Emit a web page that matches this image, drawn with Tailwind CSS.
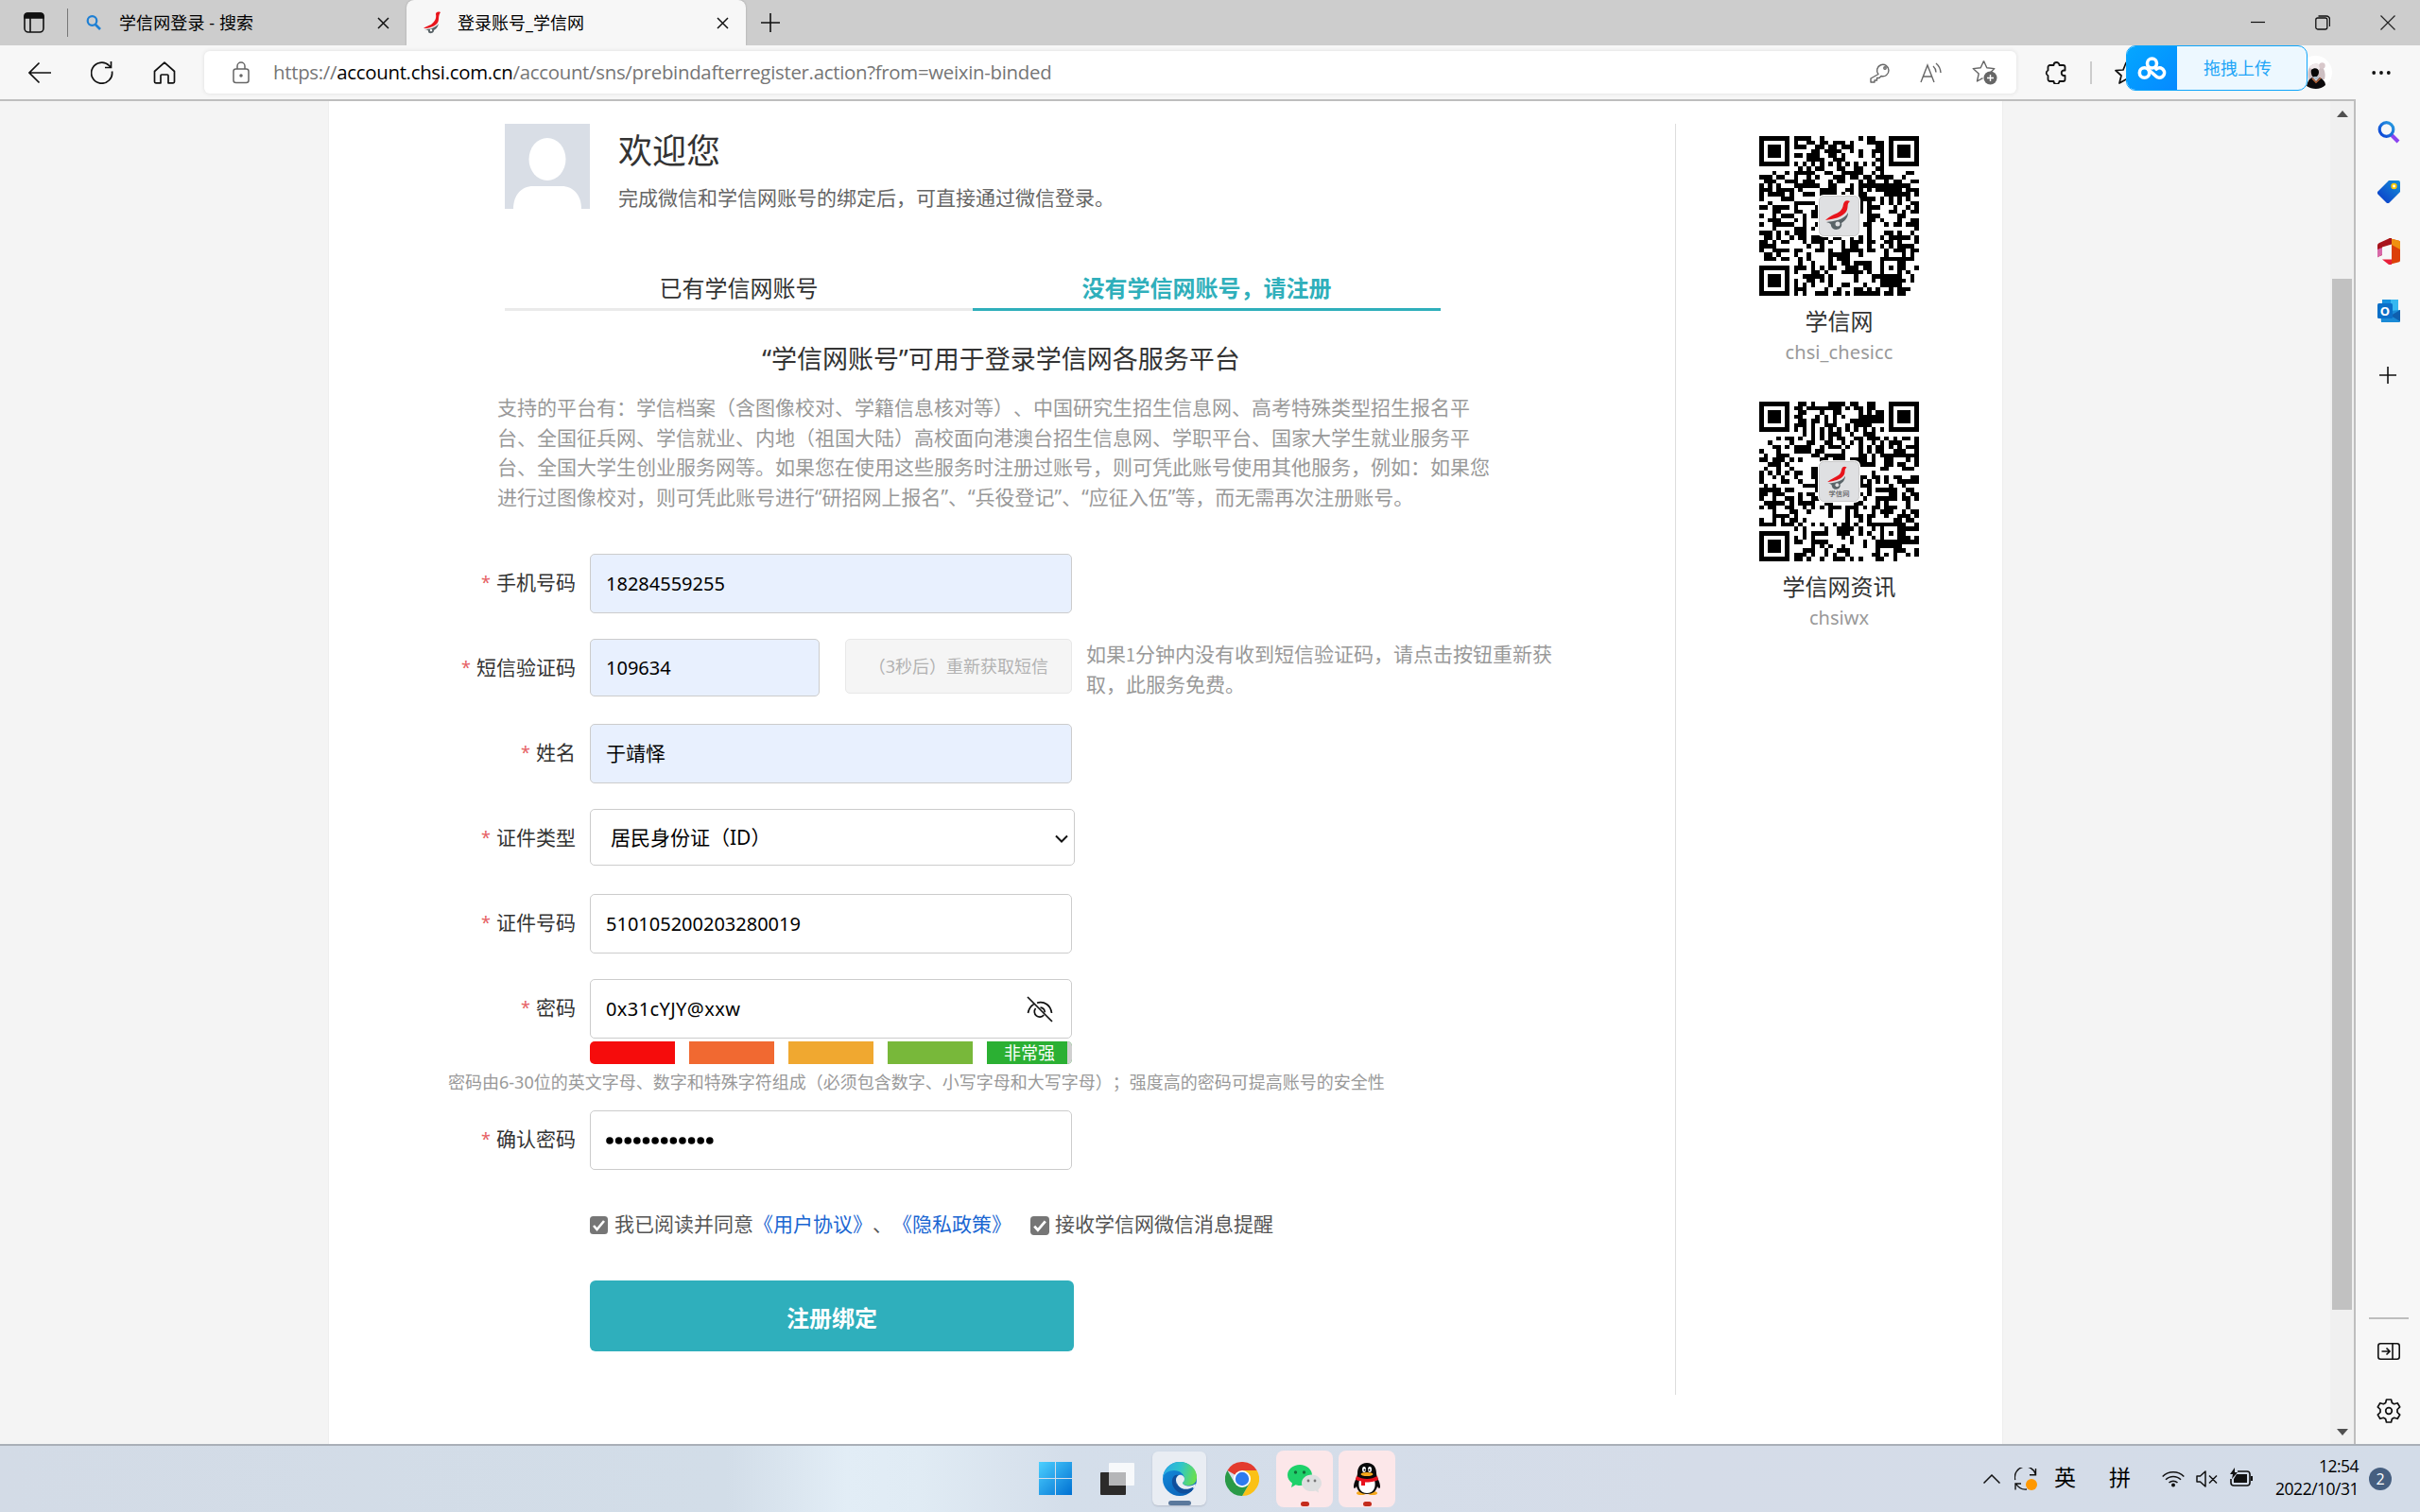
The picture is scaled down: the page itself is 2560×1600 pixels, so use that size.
<!DOCTYPE html>
<html lang="zh-CN">
<head>
<meta charset="utf-8">
<title>登录账号_学信网</title>
<script src="https://cdn.jsdelivr.net/npm/@tailwindcss/browser@4"></script>
</head>
<body class="w-[2560px] h-[1600px] overflow-hidden bg-[#f7f7f7] font-['Noto_Sans','Noto_Sans_CJK_SC',sans-serif] text-[21px] text-[#333] [text-spacing-trim:space-all]">
<div class="flex flex-col w-[2560px] h-[1600px]">

<!-- Tab strip -->
<header class="flex h-12 shrink-0 bg-[#cdcdcd] font-['Open_Sans','Noto_Sans_CJK_SC',sans-serif] text-[18px] text-black">
  <div class="flex items-center w-[430px] pl-[25px]">
    <svg class="w-[22px] h-[22px] shrink-0" viewBox="0 0 22 22" fill="none" stroke="#111" stroke-width="1.6"><rect x="1" y="1" width="20" height="20" rx="4"/><path d="M1 6V4a3 3 0 0 1 3-3h14a3 3 0 0 1 3 3v2z" fill="#111"/><path d="M7 6v15"/></svg>
    <span class="w-px h-[30px] bg-[#777] ml-6"></span>
    <svg class="w-4 h-4 ml-[19px] shrink-0" viewBox="0 0 16 16" fill="none" stroke="#1d7fd4" stroke-width="2.2"><circle cx="6.5" cy="6" r="4.8"/><path d="M10 10l5 5" stroke-width="2.6"/></svg>
    <span class="ml-[19px] w-[273px] whitespace-nowrap leading-6 tracking-[0.1px]">学信网登录 - 搜索</span>
    <svg class="w-[13px] h-[13px] shrink-0" viewBox="0 0 13 13" stroke="#111" stroke-width="1.5"><path d="M1 1l11 11M12 1L1 12"/></svg>
  </div>
  <div class="flex items-center w-[359px] h-full rounded-t-lg bg-[#f7f7f7] pl-[17px] shadow-[0_0_2px_#999]">
    <svg class="w-5 h-6 shrink-0" viewBox="0 0 20 24"><path d="M19 1c-3-1-5 0-5 2 1 4-1 8-5 11-2 1-6 2-8 4 6 0 12-2 15-6 2-3 0-7 3-11z" fill="#e8141c"/><path d="M2 19c5 0 11-1 15-6-1 4-3 6-5 7 1 3-6 5-6 1 0-1 0-1-4-2z" fill="#5a6468"/><circle cx="9" cy="20" r="1.2" fill="#fff"/></svg>
    <span class="ml-[17px] w-[274px] whitespace-nowrap leading-6">登录账号_学信网</span>
    <svg class="w-[13px] h-[13px] shrink-0" viewBox="0 0 13 13" stroke="#111" stroke-width="1.5"><path d="M1 1l11 11M12 1L1 12"/></svg>
  </div>
  <div class="flex items-center pl-4">
    <svg class="w-5 h-5" viewBox="0 0 20 20" stroke="#111" stroke-width="1.6"><path d="M10 0v20M0 10h20"/></svg>
  </div>
  <div class="flex items-center ml-auto pr-[26px] gap-[53px]">
    <svg class="w-[15px] h-4" viewBox="0 0 15 16" stroke="#111" stroke-width="1.2"><path d="M0 7.5h15"/></svg>
    <svg class="w-4 h-4" viewBox="0 0 16 16" fill="none" stroke="#111" stroke-width="1.3"><rect x=".8" y="3" width="12" height="12" rx="2"/><path d="M3.5 1h8.500a3.500 3.500 0 0 1 3.500 3.500V12"/></svg>
    <svg class="w-4 h-4" viewBox="0 0 16 16" stroke="#222" stroke-width="1.2"><path d="M.5.5l15 15M15.500.5l-15 15"/></svg>
  </div>
</header>

<!-- Toolbar -->
<div class="relative flex items-center h-[57px] shrink-0 bg-[#f7f7f7] pl-[30px] font-['Open_Sans','Noto_Sans_CJK_SC',sans-serif]">
  <svg class="w-6 h-6" viewBox="0 0 24 24" fill="none" stroke="#111" stroke-width="1.7"><path d="M24 12H1M11.500 1.500L1 12l10.500 10.500"/></svg>
  <svg class="w-6 h-6 ml-[42px]" viewBox="0 0 24 24" fill="none" stroke="#111" stroke-width="1.7"><path d="M22.500 10.500A11 11 0 1 1 19.500 4.500L21 6M21.500 0v6.500H15"/></svg>
  <svg class="w-6 h-6 ml-[42px]" viewBox="0 0 24 24" fill="none" stroke="#111" stroke-width="1.7" stroke-linejoin="round"><path d="M1.500 10.500L12 1.200l10.500 9.300V21.500a1.300 1.300 0 0 1-1.300 1.300H16V15a1 1 0 0 0-1-1H9a1 1 0 0 0-1 1v7.800H2.800a1.300 1.300 0 0 1-1.300-1.300z"/></svg>
  <div class="flex items-center w-[1917px] h-[45px] ml-[30px] rounded-md bg-white shadow-[0_0_4px_#ddd]">
    <svg class="w-[18px] h-6 ml-[30px]" viewBox="0 0 18 24" fill="none" stroke="#666" stroke-width="1.5"><rect x="1" y="8" width="16" height="14.500" rx="2.500"/><path d="M5 8V5a4 4 0 0 1 8 0v3"/><circle cx="9" cy="15" r="1" fill="#666"/></svg>
    <span class="ml-[25px] text-[20.4px] tracking-[-0.29px] text-[#757575] whitespace-nowrap">https://<span class="text-black">account.chsi.com.cn</span>/account/sns/prebindafterregister.action?from=weixin-binded</span>
    <div class="flex items-center gap-[31px] ml-auto pr-5">
      <svg class="w-[22px] h-[22px]" viewBox="0 0 22 22" fill="none" stroke="#666" stroke-width="1.4" stroke-linejoin="round"><path d="M9 12.500a6.200 6.200 0 1 1 3 2L10 16.500H7.500V19H5v2H1v-4z"/><circle cx="16" cy="6" r="1.200"/></svg>
      <svg class="w-6 h-[22px]" viewBox="0 0 24 22" fill="none" stroke="#666" stroke-width="1.400"><path d="M1 21L8 3l7 18M3.500 15h9M14 4a9 9 0 0 1 3 6.500M17 1a14 14 0 0 1 5 10"/></svg>
      <svg class="w-[27px] h-[27px]" viewBox="0 0 27 27" fill="none" stroke="#666" stroke-width="1.400" stroke-linejoin="round"><path d="M12.500 1.500l3.300 7.300 8 .8-5 5M12.500 1.500L9.200 8.800l-8 .8 6 5.400-1.700 8 6-3.300"/><circle cx="19.500" cy="19.500" r="7" fill="#666" stroke="none"/><path d="M19.500 16v7M16 19.500h7" stroke="#fff"/></svg>
    </div>
  </div>
  <svg class="w-6 h-6 ml-[30px]" viewBox="0 0 24 24" fill="none" stroke="#111" stroke-width="1.8" stroke-linejoin="round"><path d="M5.500 4H9.500a3 3 0 0 1 6 0h4a2 2 0 0 1 2 2v3.500h-1.500a2.800 2.800 0 0 0 0 5.500h1.500v4a2 2 0 0 1-2 2h-4a3 3 0 0 1-6 0h-4a2 2 0 0 1-2-2v-4a3 3 0 0 1 0-5.500V6a2 2 0 0 1 2-2z"/></svg>
  <span class="w-0.5 h-6 bg-[#ccc] ml-6"></span>
  <svg class="w-6 h-6 ml-6" viewBox="0 0 24 24" fill="none" stroke="#111" stroke-width="1.7" stroke-linejoin="round"><path d="M12 1.500l3 7.500 8 .5-6 5.500 2 8-7-4-7 4 2-8-6-5.500 8-.5z"/></svg>
  <svg class="w-[35px] h-[35px] ml-[171px]" viewBox="0 0 35 35"><circle cx="17.500" cy="17.500" r="17.500" fill="#fff"/><path d="M10 26c-1-6-1-12 2-15 4-4 10-3 13 1 3 5 3 9 2 13z" fill="#cdbfc2"/><path d="M11 13c2-5 9-6 13-2l-4 5z" fill="#efe8ea"/><circle cx="24.500" cy="10.500" r="3.200" fill="#d8c8cb"/><path d="M13 15c3-3 8-2 8 2s-3 6-5 6-4-5-3-8z" fill="#060606"/><path d="M8 32c1-5 3-8 6-9l4 4 4-4c4 2 6 5 6 8-5 5-14 5-20 1z" fill="#0c0a0c"/><path d="M14 24l4 4.500 5-5" stroke="#c46a3a" stroke-width="1.200" fill="none"/><path d="M15 22h6l-3 4z" fill="#a9bccb"/></svg>
  <svg class="w-5 h-1.5 ml-auto mr-[31px]" viewBox="0 0 20 6" fill="#111"><circle cx="2.200" cy="3" r="1.900"/><circle cx="10" cy="3" r="1.900"/><circle cx="17.800" cy="3" r="1.900"/></svg>
  <!-- Floating drag-to-upload widget -->
  <div class="absolute left-[2249px] top-0 z-10 flex w-[192px] h-12 rounded-[10px] border border-[#0ea5fb] bg-[#edf8ff] overflow-hidden text-[18px] text-[#22a5f7]">
    <div class="flex items-center justify-center w-[53px] bg-linear-to-br from-[#06a7ff] to-[#0789ff]">
      <svg class="w-[31px] h-[25px]" viewBox="0 0 31 25" fill="none" stroke="#fff" stroke-width="3.600" stroke-linecap="round"><circle cx="15.500" cy="7" r="5"/><circle cx="7.500" cy="17" r="5.200"/><path d="M11.500 13.500l8 7a5.200 5.200 0 1 0 .5-7.500"/></svg>
    </div>
    <div class="flex flex-1 items-center justify-center pr-[9px]">拖拽上传</div>
  </div>
</div>

<!-- Viewport and browser sidebar -->
<div class="flex h-[1423px] shrink-0">
  <div class="flex w-[2492px] border-t-2 border-r-2 border-[#bebebe] bg-[#f4f4f4]">
    <main class="flex w-[1772px] ml-[347px] border-x border-[#eee] bg-white">
      <section class="w-[1424px] shrink-0 pt-6">
        <!-- Greeting -->
        <div class="flex pl-[186px] h-[90px]">
          <svg class="w-[90px] h-[90px]" viewBox="0 0 90 90"><path d="M0 0h90v90H0z" fill="#d9dee6"/><ellipse cx="45" cy="37.500" rx="19.500" ry="22.500" fill="#fff"/><path d="M9 90c0-14 8-24 21-24h30c13 0 21 10 21 24z" fill="#fff"/></svg>
          <div class="ml-[30px]">
            <h1 class="text-[36px] leading-[58px]">欢迎您</h1>
            <p class="mt-1 leading-8 text-[#666]">完成微信和学信网账号的绑定后，可直接通过微信登录。</p>
          </div>
        </div>
        <!-- Tabs -->
        <div class="flex ml-[186px] mt-[60px] w-[990px] text-[24px] text-center leading-[47px]">
          <div class="w-[495px] h-12 border-b-3 border-[#eaeaea]">已有学信网账号</div>
          <div class="w-[495px] h-12 border-b-3 border-[#2fafbb] font-bold text-[#2fafbb]">没有学信网账号，请注册</div>
        </div>
        <h2 class="ml-[178px] mt-[31px] w-[1066px] text-center text-[27px] leading-10">“学信网账号”可用于登录学信网各服务平台</h2>
        <p class="ml-[178px] mt-4 text-[#999] leading-[31.5px] whitespace-nowrap">支持的平台有：学信档案（含图像校对、学籍信息核对等）、中国研究生招生信息网、高考特殊类型招生报名平<br>台、全国征兵网、学信就业、内地（祖国大陆）高校面向港澳台招生信息网、学职平台、国家大学生就业服务平<br>台、全国大学生创业服务网等。如果您在使用这些服务时注册过账号，则可凭此账号使用其他服务，例如：如果您<br>进行过图像校对，则可凭此账号进行“研招网上报名”、“兵役登记”、“应征入伍”等，而无需再次注册账号。</p>

        <!-- Form -->
        <form class="mt-[44px]">
          <div class="flex h-[90px]">
            <label class="flex items-center justify-end w-[261px] h-[61px] mr-[15px]"><span class="text-[#e66163] text-[18px] mr-1.5">*</span>手机号码</label>
            <div class="flex items-center w-[510px] h-[63px] px-4 border border-[#ccc] rounded-[5px] bg-[#e8f0fe] text-[20px] text-black">18284559255</div>
          </div>
          <div class="flex h-[90px]">
            <label class="flex items-center justify-end w-[261px] h-[61px] mr-[15px]"><span class="text-[#e66163] text-[18px] mr-1.5">*</span>短信验证码</label>
            <div class="flex items-center w-[243px] h-[61px] px-4 border border-[#ccc] rounded-[5px] bg-[#e8f0fe] text-[20px] text-black">109634</div>
            <div class="flex items-center justify-end w-[240px] h-[58px] ml-[27px] pr-[24px] border border-[#e8e8e8] rounded-[5px] bg-[#f5f5f5] text-[18px] text-[#b2b2b2]">（3秒后）重新获取短信</div>
            <p class="ml-[15px] pt-px text-[#999] leading-[31.5px] whitespace-nowrap">如果<span class="font-['Noto_Sans_CJK_SC'] text-[18px]">1</span>分钟内没有收到短信验证码，请点击按钮重新获<br>取，此服务免费。</p>
          </div>
          <div class="flex h-[90px]">
            <label class="flex items-center justify-end w-[261px] h-[61px] mr-[15px]"><span class="text-[#e66163] text-[18px] mr-1.5">*</span>姓名</label>
            <div class="flex items-center w-[510px] h-[63px] px-4 border border-[#ccc] rounded-[5px] bg-[#e8f0fe] text-black">于靖怿</div>
          </div>
          <div class="flex h-[90px]">
            <label class="flex items-center justify-end w-[261px] h-[61px] mr-[15px]"><span class="text-[#e66163] text-[18px] mr-1.5">*</span>证件类型</label>
            <div class="flex items-center justify-between w-[513px] h-[60px] pl-[21px] pr-1.5 border border-[#ccc] rounded-[5px] text-black pt-0.5">居民身份证（ID）
              <svg class="w-3.5 h-[9px]" viewBox="0 0 14 9" fill="none" stroke="#111" stroke-width="2"><path d="M1 1.500l6 6 6-6"/></svg></div>
          </div>
          <div class="flex h-[90px]">
            <label class="flex items-center justify-end w-[261px] h-[61px] mr-[15px]"><span class="text-[#e66163] text-[18px] mr-1.5">*</span>证件号码</label>
            <div class="flex items-center w-[510px] h-[63px] px-4 border border-[#ccc] rounded-[5px] text-[20px] text-black">510105200203280019</div>
          </div>
          <div class="flex h-[66px]">
            <label class="flex items-center justify-end w-[261px] h-[61px] mr-[15px]"><span class="text-[#e66163] text-[18px] mr-1.5">*</span>密码</label>
            <div class="flex items-center justify-between w-[510px] h-[63px] pl-4 pr-[19px] border border-[#ccc] rounded-[5px] text-[20px] text-black"><span class="tracking-[0.4px]">0x31cYJY@xxw</span>
              <svg class="w-7 h-7" viewBox="0 0 28 28" fill="none" stroke="#111" stroke-width="1.700"><path d="M1 1l26 26M1.500 18c.8-4.500 3-7.500 6-9.300M11 7.200C19 5 25.500 10 26.500 18M9.500 13a5.500 5.500 0 1 0 8.700 7M14.500 12.200a5.500 5.500 0 0 1 4.800 5"/></svg></div>
          </div>
          <div class="flex gap-[15px] ml-[276px] w-[510px] h-6 rounded-[5px] overflow-hidden">
            <div class="w-[90px] bg-[#f60c0c]"></div>
            <div class="w-[90px] bg-[#f16931]"></div>
            <div class="w-[90px] bg-[#f0a830]"></div>
            <div class="w-[90px] bg-[#78b83a]"></div>
            <div class="flex items-center justify-center w-[90px] border-r-5 border-[#d0d0d0] bg-[#2bb033] text-[18px] leading-6 text-white pl-[5px]">非常强</div>
          </div>
          <p class="ml-[126px] h-[49px] text-[18px] leading-[39px] text-[#999] whitespace-nowrap">密码由6-30位的英文字母、数字和特殊字符组成（必须包含数字、小写字母和大写字母）；强度高的密码可提高账号的安全性</p>
          <div class="flex h-[63px]">
            <label class="flex items-center justify-end w-[261px] h-[61px] mr-[15px]"><span class="text-[#e66163] text-[18px] mr-1.5">*</span>确认密码</label>
            <div class="flex items-center w-[510px] h-[63px] px-4 pt-px border border-[#ccc] rounded-[5px]">
              <svg class="w-[115px] h-2" viewBox="0 0 115 8"><path d="M4 4h106" stroke="#000" stroke-width="7.600" stroke-linecap="round" stroke-dasharray="0 9.620"/></svg>
            </div>
          </div>
          <div class="flex items-center ml-[276px] mt-[42px] h-8 text-[#555] whitespace-nowrap">
            <svg class="w-[19px] h-[19px] mr-[7px]" viewBox="0 0 19 19"><rect width="19" height="19" rx="3.500" fill="#767676"/><path d="M4 10l3.500 4L15 5" fill="none" stroke="#fff" stroke-width="2.600"/></svg>
            <span>我已阅读并同意<span class="text-[#1a66d2]">《用户协议》</span>、<span class="text-[#1a66d2]">《隐私政策》</span></span>
            <svg class="w-5 h-5 ml-5 mr-1.5 mt-0.5" viewBox="0 0 19 19"><rect width="19" height="19" rx="3.500" fill="#767676"/><path d="M4 10l3.500 4L15 5" fill="none" stroke="#fff" stroke-width="2.600"/></svg>
            <span>接收学信网微信消息提醒</span>
          </div>
          <div class="flex items-center justify-center ml-[276px] mt-[43px] w-[512px] h-[75px] rounded-md bg-[#2fafbc] text-[24px] font-bold text-white pt-1">注册绑定</div>
        </form>
      </section>

      <!-- Official accounts -->
      <aside class="flex flex-col items-center w-[346px] h-[1345px] mt-6 border-l border-[#ddd] pt-[13px]">
        <div class="relative w-[169px] h-[169px]">
          <svg data-qr="7" class="w-[169px] h-[169px]" viewBox="0 0 37 37" shape-rendering="crispEdges"></svg>
          <svg class="absolute left-[62px] top-[62px] w-[45px] h-[45px]" viewBox="0 0 45 45"><rect width="45" height="45" rx="6" fill="#fff"/><rect x="1.500" y="1.500" width="42" height="42" rx="5" fill="#dfe0e2" stroke="#c9c9c9"/><path d="M34 7c-4-2-6 0-7 3-1 7-5 9-10 11-4 2-7 4-9 6 8-1 18-3 22-9 3-5 0-8 4-11z" fill="#e8141c"/><path d="M9 29c7-1 19-2 23-10 0 6-4 9-7 11 2 7-9 10-11 3 0-2-1-3-5-4z" fill="#5a6468"/><circle cx="21" cy="31" r="2.500" fill="#dfe0e2"/></svg>
        </div>
        <div class="mt-[10px] text-[24px] leading-[34px]">学信网</div>
        <div class="mt-0.5 text-[20px] leading-7 tracking-[0.100px] text-[#999]">chsi_chesicc</div>
        <div class="relative w-[169px] h-[169px] mt-[38px]">
          <svg data-qr="91" class="w-[169px] h-[169px]" viewBox="0 0 37 37" shape-rendering="crispEdges"></svg>
          <svg class="absolute left-[62px] top-[62px] w-[45px] h-[45px]" viewBox="0 0 45 45"><rect width="45" height="45" rx="6" fill="#fff"/><rect x="1.500" y="1.500" width="42" height="42" rx="5" fill="#dfe0e2" stroke="#c9c9c9"/><g transform="translate(4 2) scale(.78)"><path d="M34 7c-4-2-6 0-7 3-1 7-5 9-10 11-4 2-7 4-9 6 8-1 18-3 22-9 3-5 0-8 4-11z" fill="#e8141c"/><path d="M9 29c7-1 19-2 23-10 0 6-4 9-7 11 2 7-9 10-11 3 0-2-1-3-5-4z" fill="#5a6468"/><circle cx="21" cy="31" r="2.500" fill="#dfe0e2"/></g><text x="22.500" y="38" font-size="7.300" text-anchor="middle" fill="#444">学信网</text></svg>
        </div>
        <div class="mt-[10px] text-[24px] leading-[34px]">学信网资讯</div>
        <div class="mt-0.5 text-[20px] leading-7 text-[#999]">chsiwx</div>
      </aside>
    </main>
    <!-- Scrollbar -->
    <div class="flex flex-col items-center w-[25px] ml-auto bg-[#f0f0f0] pt-[10px]">
      <svg class="w-3 h-[7px]" viewBox="0 0 12 7"><path d="M6 0l6 7H0z" fill="#505050"/></svg>
      <div class="w-[21px] h-[1091px] mt-[171px] bg-[#c1c1c1]"></div>
      <svg class="w-3 h-[7px] mt-[126px]" viewBox="0 0 12 7"><path d="M6 7l6-7H0z" fill="#505050"/></svg>
    </div>
  </div>
  <nav class="flex flex-col items-center w-[68px] bg-[#f7f7f7] pt-[23px] pl-0.5">
    <svg class="w-6 h-6" viewBox="0 0 24 24" fill="none"><defs><linearGradient id="mg" x1="0" y1="1" x2="1" y2="0"><stop stop-color="#0b3fd6"/><stop offset="1" stop-color="#2aa0e0"/></linearGradient></defs><path d="M15 15l7 7" stroke="#8b44f0" stroke-width="4"/><circle cx="9.500" cy="9" r="7.300" stroke="url(#mg)" stroke-width="3.200"/></svg>
    <svg class="w-6 h-6 mt-[39px]" viewBox="0 0 24 24"><defs><linearGradient id="tg" x1="0" y1="1" x2="1" y2="0"><stop stop-color="#0a36c8"/><stop offset="1" stop-color="#1590d8"/></linearGradient></defs><path d="M12 0h10a2 2 0 0 1 2 2v10L12.500 23.500a2 2 0 0 1-3 0L.5 14.500a2 2 0 0 1 0-3z" fill="url(#tg)"/><circle cx="17.500" cy="6" r="2.300" fill="#fff" stroke="#ffc800" stroke-width="1.800"/></svg>
    <svg class="w-6 h-7 mt-[37px]" viewBox="0 0 24 28"><path d="M12 0l10 2.500a2 2 0 0 1 2 2v19a2 2 0 0 1-2 2L12 28l3-4V6z" fill="#dc4008"/><path d="M12 0l10 2.500a2 2 0 0 1 2 2V12l-9-5z" fill="#f09010"/><path d="M13 0L2 5a3 3 0 0 0-2 3v12l5-2V9.500L15 6.500V0z" fill="#a8141c"/><path d="M0 12v8.500l5-3V10z" fill="#d868a8"/><path d="M5 22.500h10V28h-3z" fill="#e8203a"/></svg>
    <svg class="w-6 h-6 mt-[37px]" viewBox="0 0 24 24"><path d="M5 0h17v14H5z" fill="#35b8f1"/><path d="M5 0h9v6H5z" fill="#1490df"/><path d="M3 13l21-2v12a1 1 0 0 1-1 1H4z" fill="#1a8ad6"/><path d="M24 11v12l-10-6z" fill="#0f5fae"/><rect y="4" width="16" height="16" rx="1.500" fill="#0a6fc8"/><text x="8" y="16.500" font-size="13" font-weight="700" fill="#fff" text-anchor="middle">O</text></svg>
    <svg class="w-[18px] h-[18px] mt-[47px] mr-0.5" viewBox="0 0 18 18" stroke="#111" stroke-width="1.600"><path d="M9 0v18M0 9h18"/></svg>
    <div class="w-[42px] h-0.5 mt-[988px] bg-[#bebebe]"></div>
    <svg class="w-6 h-[18px] mt-[25px]" viewBox="0 0 24 18" fill="none" stroke="#111" stroke-width="1.600"><rect x=".8" y=".8" width="22.400" height="16.400" rx="2.500"/><path d="M16 1v16M4.500 9H13M9.500 5.500L13 9l-3.500 3.500"/></svg>
    <svg class="w-[26px] h-[26px] mt-[41px]" viewBox="0 0 26 26" fill="none" stroke="#111" stroke-width="1.700" stroke-linejoin="round"><path d="M10.500 1h5l.9 3.500 2.200 1.200 3.600-1 2.500 4.200-2.700 2.600v3l2.700 2.600-2.500 4.200-3.600-1-2.200 1.200-.9 3.500h-5l-.9-3.500-2.200-1.200-3.600 1-2.500-4.200L4 14.500v-3L1.300 8.900l2.500-4.200 3.600 1 2.200-1.200z"/><circle cx="13" cy="13" r="3.300"/></svg>
  </nav>
</div>

<!-- Taskbar -->
<footer class="flex items-center h-[72px] shrink-0 border-t-2 border-[#a9afb7] pl-[1099px] pr-[30px] pb-px bg-[linear-gradient(90deg,#d3dbe6_0%,#d2dde8_30%,#e2edf6_35%,#e0ebf4_38%,#d4deea_44%,#d5dce8_70%,#d3dce8_100%)] font-['Open_Sans','Noto_Sans_CJK_SC',sans-serif] text-black">
  <svg class="w-[35px] h-[35px]" viewBox="0 0 35 35"><defs><linearGradient id="wg" gradientUnits="userSpaceOnUse" x1="0" y1="0" x2="35" y2="35"><stop stop-color="#4cd0ff"/><stop offset="1" stop-color="#0070d2"/></linearGradient></defs><path d="M0 0h17v17H0zM18 0h17v17H18zM0 18h17v17H0zM18 18h17v17H18z" fill="url(#wg)"/></svg>
  <svg class="w-9 h-[34px] ml-[30px]" viewBox="0 0 36 34"><rect y="10" width="27" height="24" rx="1" fill="#2c2b2a"/><rect x="9" width="27" height="24" rx="1" fill="#fff" fill-opacity=".82"/><path d="M9 10h18v14H9z" fill="#b5b6b8"/></svg>
  <div class="relative flex items-center justify-center w-[57px] h-[57px] ml-[19px] rounded-md bg-[#e9edf3] shadow-[0_1px_2px_#b5bdca]">
    <svg class="w-9 h-9" viewBox="0 0 36 36"><defs><linearGradient id="eg" x1="0" y1=".3" x2="1" y2=".5"><stop stop-color="#2aa8e8"/><stop offset=".5" stop-color="#2fc6c8"/><stop offset="1" stop-color="#6be04c"/></linearGradient><linearGradient id="eb" x1="0" y1="0" x2=".7" y2="1"><stop stop-color="#1490df"/><stop offset="1" stop-color="#0b63b8"/></linearGradient></defs><circle cx="18" cy="18" r="18" fill="url(#eb)"/><path d="M0 16C2 6 9 0 18 0c10 0 18 7 18 16 0 6-4 9-9 9-4 0-6-1-6-3 1-1 2-2 2-4 0-5-5-9-11-9C6 9 2 12 0 16z" fill="url(#eg)"/><path d="M12 15c-3 3-3 9 1 14 5 6 14 6 19 0-9 4-18-1-18-10 0-2 1-4 3-5-2-.5-4 0-5 1z" fill="#104f9c"/><path d="M17 14c4-1 6 2 6 4s-1 3-2 4c0 2 3 3.500 7 3.500 3 0 5-1 6.500-2.500L35 27l-3 1c-9 4-18-1-18-9 0-2 1-4 3-5z" fill="#e9edf3"/><path d="M14.500 20c1 8 9 11.500 18 6.500l-2 4.500c-8 4-16-2-16-11z" fill="#104f9c"/></svg>
    <span class="absolute bottom-0 left-[17px] w-6 h-[5px] rounded-full bg-[#5a789c]"></span>
  </div>
  <svg class="w-9 h-9 ml-5" viewBox="0 0 36 36"><path d="M18 18L2.400 9A18 18 0 0 1 33.600 9z" fill="#e33b2e"/><path d="M18 18V9h15.600A18 18 0 0 1 18 36l7.800-13.500z" fill="#fbc116"/><path d="M18 18l7.800 4.500L18 36A18 18 0 0 1 2.400 9l7.800 13.500z" fill="#2a9a47"/><circle cx="18" cy="18" r="9" fill="#fff"/><circle cx="18" cy="18" r="7.200" fill="#2f7bee"/></svg>
  <div class="relative flex items-center justify-center w-[60px] h-[60px] ml-[18px] rounded-lg bg-[#fce7e9]">
    <svg class="w-9 h-[30px]" viewBox="0 0 36 30"><path d="M13 0c7.500 0 13 5 13 11s-5.500 11-13 11c-2 0-3-.3-4.500-.8L4 24l1-4.500C2 17.500 0 14.500 0 11 0 5 5.500 0 13 0z" fill="#1fd16a"/><circle cx="8.500" cy="8" r="1.700" fill="#12703a"/><circle cx="17.500" cy="8" r="1.700" fill="#12703a"/><path d="M25.500 10.500c6 0 10.500 4 10.500 9 0 3-1.500 5-3.500 6.700l.5 3.300-3.500-2c-1.200.4-2.500.6-4 .6-6 0-10.500-3.800-10.500-8.600s4.500-9 10.500-9z" fill="#dedfe0"/><circle cx="22" cy="17" r="1.400" fill="#777"/><circle cx="29" cy="17" r="1.400" fill="#777"/></svg>
    <span class="absolute bottom-px left-[26px] w-[9px] h-[5px] rounded-full bg-[#c42b1c]"></span>
  </div>
  <div class="relative flex items-center justify-center w-[60px] h-[60px] ml-1.5 rounded-lg bg-[#fce7e9]">
    <svg class="w-7 h-[34px]" viewBox="0 0 28 34"><ellipse cx="8" cy="32" rx="5" ry="2" fill="#f6a81c"/><ellipse cx="20" cy="32" rx="5" ry="2" fill="#f6a81c"/><path d="M14 0c7 0 10 5 10 11 0 4 4 9 4 14 0 2-1 3-3 0-1 5-5 8-11 8s-10-3-11-8c-2 3-3 2-3 0 0-5 4-10 4-14C4 5 7 0 14 0z" fill="#0a0a0a"/><path d="M6 18h16c2 8-1 14-8 14S4 26 6 18z" fill="#fff"/><ellipse cx="11" cy="7" rx="2" ry="3" fill="#fff"/><ellipse cx="17" cy="7" rx="2" ry="3" fill="#fff"/><circle cx="11.500" cy="7.500" r="1"/><circle cx="16.500" cy="7.500" r="1"/><ellipse cx="14" cy="12" rx="6.500" ry="2" fill="#f6a81c"/><path d="M3 14c7 4 15 4 22 0l1 4c-4 2-9 2.500-14 2.500V24H8v-4.500c-3-.5-5-1-6-2z" fill="#e8111c"/></svg>
    <span class="absolute bottom-px left-[26px] w-[9px] h-[5px] rounded-full bg-[#c42b1c]"></span>
  </div>

  <!-- System tray -->
  <div class="flex items-center w-[432px] ml-auto whitespace-nowrap">
    <svg class="w-[18px] h-[10px]" viewBox="0 0 18 10" fill="none" stroke="#111" stroke-width="1.500"><path d="M.5 9.500L9 1l8.500 8.500"/></svg>
    <svg class="w-6 h-6 ml-[15px]" viewBox="0 0 24 24" fill="none" stroke="#111" stroke-width="1.400"><path d="M.7 13A11 11 0 0 1 22.500 7.500M22.500 1v6.700H16M7 17H1v6.500M1.500 17c3 5 7 6.500 11.500 6"/><circle cx="18" cy="18" r="6" fill="#ff9800" stroke="none"/></svg>
    <span class="ml-[18px] w-[58px] text-[23px] pb-0.5">英</span>
    <span class="w-14 text-[23px] pb-0.5">拼</span>
    <svg class="w-6 h-[18px]" viewBox="0 0 24 18" fill="none" stroke="#111" stroke-width="1.500"><path d="M.7 6.500a16 16 0 0 1 22.600 0M4 9.800a11.300 11.300 0 0 1 16 0M7.500 13a6.500 6.500 0 0 1 9 0"/><circle cx="12" cy="15.500" r="2" fill="#111" stroke="none"/></svg>
    <svg class="w-[23px] h-[18px] ml-3" viewBox="0 0 23 18" fill="none" stroke="#111" stroke-width="1.500" stroke-linejoin="round"><path d="M1 6h3.500L10 1v16l-5.500-5H1zM14 5.500l8 8M22 5.500l-8 8"/></svg>
    <svg class="w-6 h-5 ml-[13px] mb-1" viewBox="0 0 24 20" fill="none" stroke="#111" stroke-width="1.600"><path d="M8 4h10a3 3 0 0 1 3 3v9a3 3 0 0 1-3 3H4a3 3 0 0 1-3-3v-4"/><path d="M7 7h11v9H4v-4z" fill="#111" stroke="none"/><path d="M22 9v5h2V9zM5 0L0 7h3L2 12l6-7H5z" fill="#111" stroke="none"/></svg>
    <div class="ml-auto pb-[3px] text-right text-[17.5px] leading-6 tracking-[-0.500px]">12:54<br>2022/10/31</div>
    <span class="flex items-center justify-center w-6 h-6 ml-[11px] rounded-full bg-[#465f80] text-white text-[16px]">2</span>
  </div>
</footer>
</div>

<script>
// Fills every svg[data-qr] with a 37-module matrix: finders, timing, alignment and seeded data.
document.querySelectorAll('svg[data-qr]').forEach(function (svg) {
  var n = 37, seed = +svg.dataset.qr * 7919, d = '';
  function rnd() { seed = (seed * 1103515245 + 12345) % 2147483648; return seed / 2147483648; }
  function ring(x, y, cx, cy) { return Math.max(Math.abs(x - cx), Math.abs(y - cy)); }
  for (var y = 0; y < n; y++) for (var x = 0; x < n; x++) {
    var on = rnd() < 0.5;
    if (x === 6 || y === 6) on = (x + y) % 2 === 0;
    var a = ring(x, y, 30, 30);
    if (a <= 2) on = a !== 1;
    [[3, 3], [33, 3], [3, 33]].forEach(function (c) {
      var r = ring(x, y, c[0], c[1]);
      if (r <= 4) on = r !== 4 && r !== 2;
    });
    if (on) d += 'M' + x + ' ' + y + 'h1v1h-1z';
  }
  svg.innerHTML = '<path d="' + d + '" fill="#000"/>';
});
</script>
</body>
</html>
